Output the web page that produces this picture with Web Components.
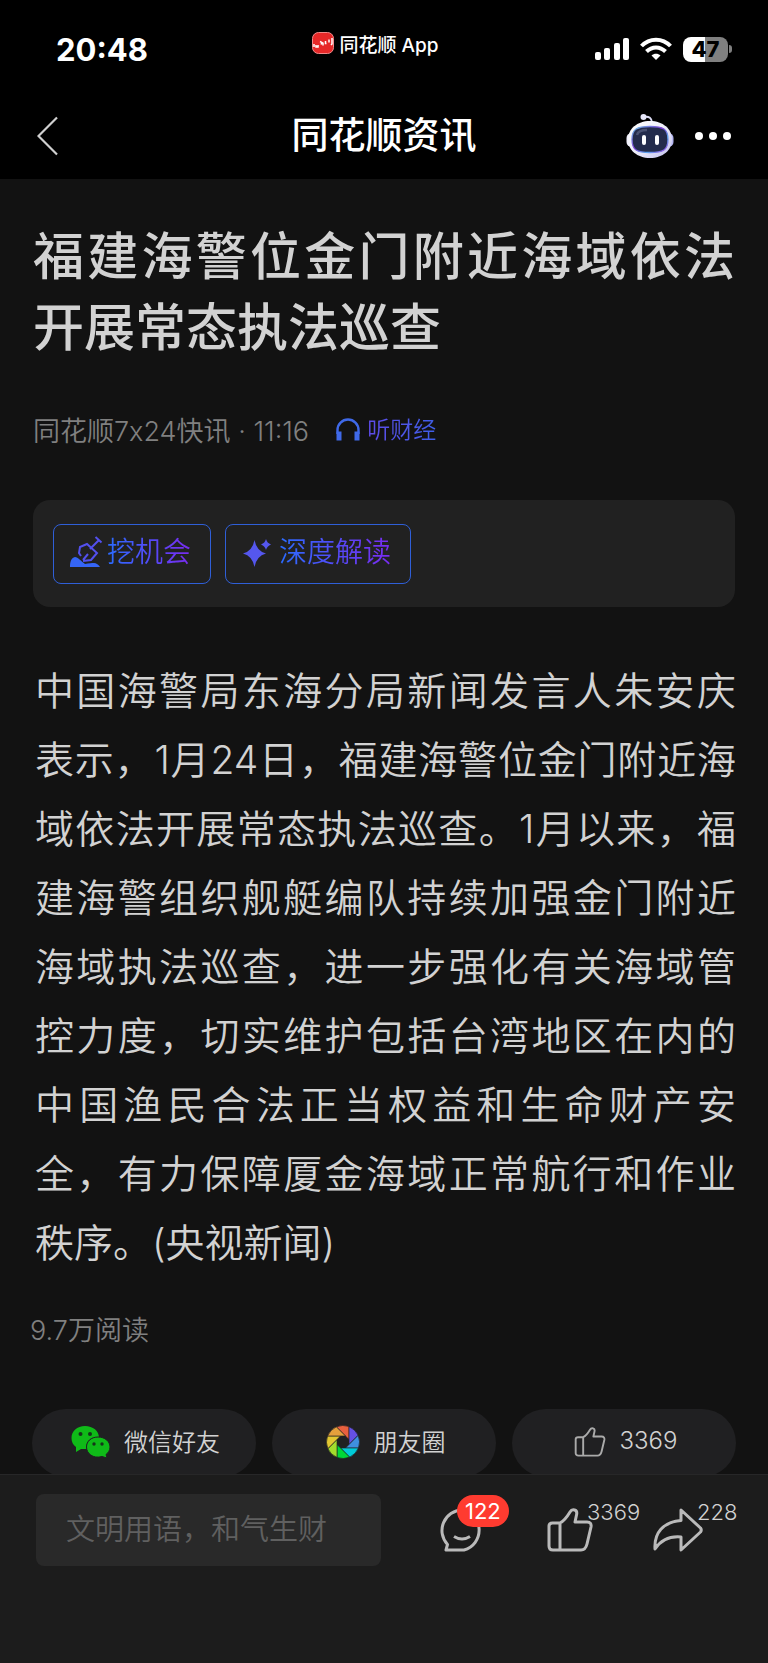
<!DOCTYPE html>
<html lang="zh-CN">
<head>
<meta charset="utf-8">
<meta name="viewport" content="width=device-width, initial-scale=1">
<title>同花顺资讯</title>
<style>
    body {
        margin: 0;
        background-color: #121212;
        font-family: Inter, "Noto Sans CJK SC", sans-serif;
        color: #d2d2d2;
    }
</style>
</head>
<body>
<app-screen>
    <status-bar slot="top" time="20:48" battery="47">同花顺 App</status-bar>
    <nav-header slot="top">同花顺资讯</nav-header>
    <news-article>
        <span slot="title">福建海警位金门附近海域依法开展常态执法巡查</span>
        <span slot="source">同花顺7x24快讯 · 11:16</span>
        <chip-button slot="tools" icon="dig">挖机会</chip-button>
        <chip-button slot="tools" icon="sparkle">深度解读</chip-button>
        <span slot="body">中国海警局东海分局新闻发言人朱安庆表示，1月24日，福建海警位金门附近海域依法开展常态执法巡查。1月以来，福建海警组织舰艇编队持续加强金门附近海域执法巡查，进一步强化有关海域管控力度，切实维护包括台湾地区在内的中国渔民合法正当权益和生命财产安全，有力保障厦金海域正常航行和作业秩序。(央视新闻)</span>
        <span slot="reads">9.7万阅读</span>
        <share-pill slot="share" icon="wechat">微信好友</share-pill>
        <share-pill slot="share" icon="moments">朋友圈</share-pill>
        <share-pill slot="share" icon="like">3369</share-pill>
    </news-article>
    <comment-bar slot="bottom" comments="122" likes="3369" shares="228"></comment-bar>
</app-screen>

<script>
const THUMB = `
    <path d="M13 15 C17 13 20 9 23 4 C25 0.500 31 1 29.500 7 L28 14 H40 C43.500 14 44.500 16 44 19 L40 36 C39 40 37.500 42 34 42 H6 C3.500 42 2 40.500 2 38 V18 C2 16 3.500 15 5.500 15 Z M13 15 V42"/>`;

const ICONS = {
    logo: `<svg width="22" height="22" viewBox="0 0 22 22">
        <rect x="0.500" y="0.500" width="21" height="21" rx="6" fill="#e62828" stroke="#f08a8a"/>
        <path d="M2 12v3M4 13v2h2v-2M8 9.500l2 1-1 2M11 10.500v3M13.500 9v2.500h1M17 7.500v3M20 6v6l-1 1" fill="none" stroke="#fff" stroke-width="1.500"/>
    </svg>`,
    signal: `<svg width="34" height="24" viewBox="0 0 34 24" fill="#fff">
        <rect x="0" y="15" width="6" height="8" rx="2"/><rect x="9" y="11" width="6" height="12" rx="2"/>
        <rect x="19" y="6" width="6" height="17" rx="2"/><rect x="28" y="1" width="6" height="22" rx="2"/>
    </svg>`,
    wifi: `<svg width="32" height="24" viewBox="0 0 32 24" fill="none" stroke="#fff" stroke-width="4">
        <path d="M1.500 9C9.500 0.500 22.500 0.500 30.500 9"/>
        <path d="M6.500 14.500c5.500-5.500 13.500-5.500 19 0"/>
        <path d="M11.500 18.500c2.500-2.500 6.500-2.500 9 0L16 23z" fill="#fff" stroke="none"/>
    </svg>`,
    back: `<svg width="22" height="40" viewBox="0 0 22 40" fill="none" stroke="#d0d0d0" stroke-width="2.200">
        <path d="M20 1.500L1.500 20L20 38.500"/>
    </svg>`,
    robot: `<svg width="48" height="46" viewBox="0 0 48 46">
        <defs>
            <linearGradient id="shell" x1="0" y1="0" x2="1" y2="1"><stop offset="0" stop-color="#fff"/><stop offset="0.500" stop-color="#eeeefa"/><stop offset="1" stop-color="#c0beee"/></linearGradient>
            <linearGradient id="rim" x1="0" y1="0" x2="1" y2="1"><stop offset="0" stop-color="#6bc6e8"/><stop offset="0.450" stop-color="#8040d8"/><stop offset="0.700" stop-color="#59a5ef"/><stop offset="1" stop-color="#a040e0"/></linearGradient>
        </defs>
        <path d="M18 4c5-1 8 1 8 6" fill="none" stroke="#dcdcf4" stroke-width="2"/>
        <circle cx="17.500" cy="4" r="3" fill="#e8e8fa"/>
        <rect x="0.500" y="20" width="10" height="14" rx="5" fill="#f0f0fc"/>
        <rect x="37.500" y="20" width="10" height="14" rx="5" fill="#b4b6f2"/>
        <path d="M24 8C37 8 46 16 46 26.500S37 45 24 45S2 37 2 26.500S11 8 24 8Z" fill="url(#shell)"/>
        <path d="M24 13.500C37 13.500 42 16 42 26.500S37 39.500 24 39.500S6 37 6 26.500S11 13.500 24 13.500Z" fill="#242c4c" stroke="url(#rim)" stroke-width="1.300"/>
        <path d="M11 22c1-4 5-5 10-5" fill="none" stroke="#4a5272" stroke-width="2.500"/>
        <rect x="16" y="22" width="4" height="10" rx="2" fill="#fff"/>
        <rect x="29" y="22" width="4" height="10" rx="2" fill="#fff"/>
    </svg>`,
    more: `<svg width="36" height="8" viewBox="0 0 36 8" fill="#fff">
        <circle cx="4" cy="4" r="4"/><circle cx="18" cy="4" r="4"/><circle cx="32" cy="4" r="4"/>
    </svg>`,
    headphones: `<svg width="26" height="24" viewBox="0 0 26 24" fill="none" stroke="#3f69e8">
        <path d="M2.500 16V12a10.500 10.500 0 0 1 21 0v4" stroke-width="2.400"/>
        <path d="M4 13.500v9M22 13.500v9" stroke-width="5"/>
    </svg>`,
    dig: `<svg width="34" height="32" viewBox="0 0 34 32" fill="none" stroke="#5350ee" stroke-width="2">
        <path d="M12 20l-2-3 1-6 7-3 10 9-6 7-8 1M21 13l9-9M26.500 1l6 5.500M19 18l-5 6"/>
        <path d="M1 31c0-5 1-9 5-10 3 0 6 4 10 7 4-1 7-1 9-1s5 2 6 4z" fill="#3565f6" stroke="none"/>
    </svg>`,
    sparkle: `<svg width="34" height="32" viewBox="0 0 34 32" fill="#5557ee">
        <path d="M13.500 4Q15.500 15 25 17.500Q15.500 20 13.500 31Q11.500 20 2 17.500Q11.500 15 13.500 4Z"/>
        <path d="M25 3Q26 7 30 8.500Q26 10 25 14Q24 10 20 8.500Q24 7 25 3Z"/>
    </svg>`,
    wechat: `<svg width="39" height="34" viewBox="0 0 39 34" fill="#0fba18">
        <path d="M14 1C22 1 28 6 28 12.500C21 11 14 16 15.500 24L10 24L5 27V22C2 20 0.500 17 0.500 13C0.500 6 6 1 14 1Z"/>
        <path d="M27 12C34 12 39 16.500 39 22C39 25.500 37 28 35 29.500L36 33L31 31.500C22 34 15.500 28.500 15.500 22C15.500 16.500 20 12 27 12Z" stroke="#202022"/>
        <g fill="#15351a"><circle cx="9.500" cy="9" r="2"/><circle cx="19" cy="9" r="2"/><circle cx="23" cy="19" r="1.700"/><circle cx="31" cy="19" r="1.700"/></g>
    </svg>`,
    like: `<svg width="32" height="30" viewBox="0 0 46 44" fill="none" stroke="#aaa" stroke-width="2.800" stroke-linejoin="round">${THUMB}</svg>`,
    thumb: `<svg width="46" height="44" viewBox="0 0 46 44" fill="none" stroke="#bababa" stroke-width="3" stroke-linejoin="round">${THUMB}</svg>`,
    bubble: `<svg width="46" height="44" viewBox="0 0 46 44" fill="none" stroke="#bababa" stroke-width="3" stroke-linejoin="round">
        <path d="M22 2A20.500 20.500 0 0 0 7.500 36.500L6 42H24A20.500 20.500 0 0 0 22 2Z"/>
        <path d="M14 28.500q8 5 16 0"/>
    </svg>`,
    share: `<svg width="50" height="44" viewBox="0 0 50 44" fill="none" stroke="#bababa" stroke-width="3" stroke-linejoin="round">
        <path d="M28 2L47.500 20Q49 22 47.500 24L28 42V29C17 28 8 32 2 41C1 25 10 14 28 12.500Z"/>
    </svg>`
};

// camera shutter with eight coloured blades
function shutterIcon() {
    const colors = ["#e8603e", "#6550e4", "#3f8fe0", "#00cbd8", "#00d838", "#a2dc2c", "#e2c732", "#e5a03c"];
    const blades = colors.map((color, i) =>
        `<path d="M6 -2.500V-15.400A16.500 16.500 0 0 0 -6.600 -15.100Z" fill="${color}" transform="rotate(${i * 45})"/>`
    ).join("");
    return `<svg width="34" height="34" viewBox="-17 -17 34 34" stroke="#202022" stroke-width="0.600">${blades}</svg>`;
}
ICONS.moments = shutterIcon();

const RESET = `
    :host, * { box-sizing: border-box; }
    svg { display: block; flex: none; }
    button {
        appearance: none;
        margin: 0;
        padding: 0;
        border: none;
        background: none;
        font: inherit;
        color: inherit;
        cursor: pointer;
    }
`;

class BaseElement extends HTMLElement {
    connectedCallback() {
        if (this.shadowRoot) return;
        const template = document.createElement("template");
        template.innerHTML = `<style>${RESET}</style>${this.render()}`;
        this.attachShadow({mode: "open"});
        this.shadowRoot.appendChild(template.content.cloneNode(true));
    }
}

class AppScreen extends BaseElement {
    render() {
        return `
            <style>
                :host {
                    display: flex;
                    flex-direction: column;
                    min-height: 100vh;
                }
                main { flex-grow: 1; }
            </style>
            <slot name="top"></slot>
            <main><slot></slot></main>
            <slot name="bottom"></slot>
        `;
    }
}
customElements.define("app-screen", AppScreen);

class StatusBar extends BaseElement {
    render() {
        return `
            <style>
                :host {
                    display: flex;
                    justify-content: space-between;
                    align-items: center;
                    height: 92px;
                    padding: 6px 36px 0 56px;
                    background-color: #000;
                    color: #fff;
                }
                time { font-size: 31px; font-weight: 700; }
                .app {
                    display: flex;
                    align-items: center;
                    gap: 5px;
                    padding: 0 0 12px 8px;
                    font-size: 19px;
                    font-weight: 500;
                }
                .state { display: flex; align-items: center; gap: 11px; }
                .battery { display: flex; align-items: center; gap: 1px; }
                .level {
                    width: 45px;
                    border-radius: 8px;
                    background: linear-gradient(90deg, #fff 48%, #808080 48%);
                    color: #000;
                    font-size: 22px;
                    font-weight: 800;
                    line-height: 25px;
                    text-align: center;
                }
                .tip {
                    width: 3px;
                    height: 8px;
                    border-radius: 0 3px 3px 0;
                    background-color: #808080;
                }
            </style>
            <time>${this.getAttribute("time")}</time>
            <div class="app">${ICONS.logo}<span><slot></slot></span></div>
            <div class="state">
                ${ICONS.signal}
                ${ICONS.wifi}
                <div class="battery"><span class="level">${this.getAttribute("battery")}</span><span class="tip"></span></div>
            </div>
        `;
    }
}
customElements.define("status-bar", StatusBar);

class NavHeader extends BaseElement {
    render() {
        return `
            <style>
                :host {
                    display: grid;
                    grid-template-columns: 1fr auto 1fr;
                    align-items: center;
                    height: 87px;
                    padding: 0 37px;
                    background-color: #000;
                    color: #fff;
                }
                h1 {
                    margin: 0;
                    font-size: 37px;
                    font-weight: 500;
                    line-height: 54px;
                }
                .actions {
                    display: flex;
                    justify-content: flex-end;
                    align-items: center;
                    gap: 21px;
                }
            </style>
            <button aria-label="返回">${ICONS.back}</button>
            <h1><slot></slot></h1>
            <div class="actions">
                <button aria-label="智能助手">${ICONS.robot}</button>
                <button aria-label="更多">${ICONS.more}</button>
            </div>
        `;
    }
}
customElements.define("nav-header", NavHeader);

class NewsArticle extends BaseElement {
    render() {
        return `
            <style>
                :host {
                    display: block;
                    padding: 42px 33px 0;
                }
                h2 {
                    margin: 0;
                    font-size: 51px;
                    font-weight: 500;
                    line-height: 71px;
                    text-align: justify;
                }
                .meta {
                    display: flex;
                    align-items: center;
                    gap: 26px;
                    margin-top: 48px;
                    color: #808080;
                    font-size: 27px;
                    font-weight: 350;
                    line-height: 42px;
                }
                a {
                    display: flex;
                    align-items: center;
                    gap: 6px;
                    padding-bottom: 5px;
                    font-size: 23px;
                    line-height: 36px;
                    text-decoration: none;
                }
                a span {
                    background: linear-gradient(90deg, #5e4be8, #3f5fe8);
                    background-clip: text;
                    color: transparent;
                }
                .tools {
                    display: flex;
                    gap: 14px;
                    margin-top: 47px;
                    padding: 24px 20px 23px;
                    border-radius: 17px;
                    background-color: #212121;
                }
                p {
                    margin: 49px -1px 0 2px;
                    font-size: 39px;
                    font-weight: 350;
                    line-height: 69px;
                    text-align: justify;
                }
                .reads {
                    margin: 34px -3px 0;
                    color: #808080;
                    font-size: 27px;
                    font-weight: 350;
                    line-height: 40px;
                }
                /* the last pixels of the pills slide under the comment bar */
                .share {
                    display: grid;
                    grid-template-columns: repeat(3, 1fr);
                    gap: 16px;
                    margin: 58px -1px -3px;
                }
            </style>
            <article>
                <h2><slot name="title"></slot></h2>
                <div class="meta">
                    <slot name="source"></slot>
                    <a href="#listen">${ICONS.headphones}<span>听财经</span></a>
                </div>
                <div class="tools"><slot name="tools"></slot></div>
                <p><slot name="body"></slot></p>
                <div class="reads"><slot name="reads"></slot></div>
                <div class="share"><slot name="share"></slot></div>
            </article>
        `;
    }
}
customElements.define("news-article", NewsArticle);

class ChipButton extends BaseElement {
    render() {
        return `
            <style>
                :host { display: block; }
                button {
                    display: flex;
                    align-items: center;
                    gap: 4px;
                    height: 60px;
                    padding: 0 19px 4px 15px;
                    border: 1px solid #2f5fd8;
                    border-radius: 8px;
                    font-size: 28px;
                    font-weight: 350;
                    line-height: 42px;
                }
                span {
                    background: linear-gradient(90deg, #2b6cff, #7a2bf0);
                    background-clip: text;
                    color: transparent;
                }
            </style>
            <button>${ICONS[this.getAttribute("icon")]}<span><slot></slot></span></button>
        `;
    }
}
customElements.define("chip-button", ChipButton);

class SharePill extends BaseElement {
    render() {
        return `
            <style>
                :host { display: block; }
                button {
                    display: flex;
                    justify-content: center;
                    align-items: center;
                    gap: 14px;
                    width: 100%;
                    height: 68px;
                    padding: 0 0 2px 3px;
                    border-radius: 34px;
                    background-color: #202022;
                    font-size: 24px;
                    font-weight: 350;
                }
                span { padding-bottom: 3px; }
            </style>
            <button>${ICONS[this.getAttribute("icon")]}<span><slot></slot></span></button>
        `;
    }
}
customElements.define("share-pill", SharePill);

class CommentBar extends BaseElement {
    render() {
        return `
            <style>
                :host {
                    position: relative;
                    display: grid;
                    grid-template-columns: 1fr 107px 106px 83px;
                    align-items: center;
                    padding: 19px 32px 97px 36px;
                    border-top: 1px solid #272728;
                    background-color: #1c1c1c;
                }
                input {
                    min-width: 0;
                    height: 72px;
                    margin-right: 59px;
                    padding: 0 30px 2px;
                    border: none;
                    border-radius: 8px;
                    outline: none;
                    background-color: #292929;
                    color: #d2d2d2;
                    font: 350 29px Inter, "Noto Sans CJK SC", sans-serif;
                }
                input::placeholder { color: #606060; }
                button {
                    position: relative;
                    display: flex;
                    align-items: center;
                    height: 64px;
                    font-size: 22px;
                    line-height: 28px;
                }
                .count {
                    align-self: flex-start;
                    margin-left: -6px;
                    font-weight: 350;
                }
                .badge {
                    position: absolute;
                    top: -3px;
                    left: 17px;
                    padding: 0 8px;
                    border-radius: 16px;
                    background-color: #ff3b30;
                    color: #fff;
                    line-height: 32px;
                }
            </style>
            <input type="text" aria-label="发表评论" placeholder="文明用语，和气生财">
            <button aria-label="评论">${ICONS.bubble}<span class="badge">${this.getAttribute("comments")}</span></button>
            <button aria-label="点赞">${ICONS.thumb}<span class="count">${this.getAttribute("likes")}</span></button>
            <button aria-label="分享">${ICONS.share}<span class="count">${this.getAttribute("shares")}</span></button>
        `;
    }
}
customElements.define("comment-bar", CommentBar);
</script>
</body>
</html>
